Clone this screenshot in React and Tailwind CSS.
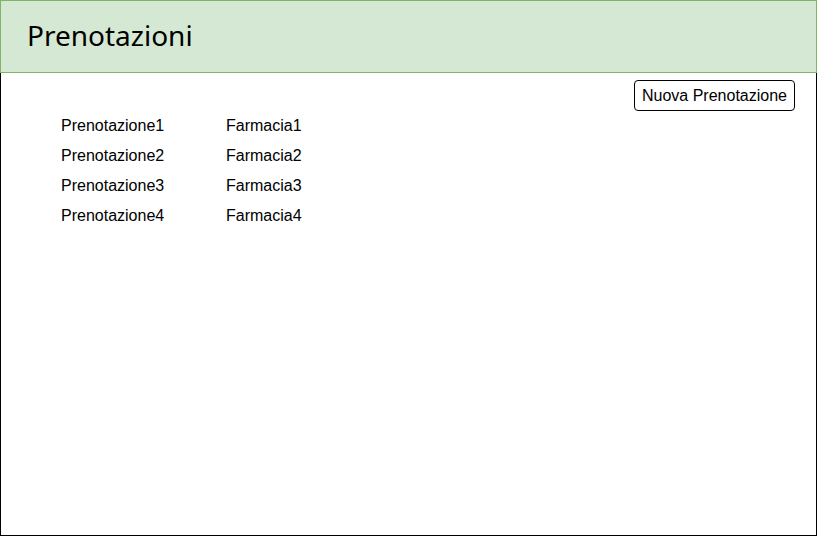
export default function App() {
  const rows = [1, 2, 3, 4];
  return (
    <div className="w-[817px] h-[536px] bg-white flex flex-col">
      <div className="h-[73px] border border-[#82b366] bg-[#d5e8d4] flex items-center pl-[26px] pb-[3px]">
        <span className="text-[28px] text-black" style={{ fontFamily: '"Noto Sans", sans-serif' }}>Prenotazioni</span>
      </div>
      <div className="flex-1 border-l border-r border-b border-black flex flex-col" style={{ fontFamily: '"Liberation Sans", Arial, sans-serif' }}>
        <div className="flex justify-end pt-[7px] pr-[21px]">
          <button className="w-[161px] h-[31px] border border-black rounded-[4px] text-[16px] text-black bg-white flex items-center justify-center">
            Nuova Prenotazione
          </button>
        </div>
        <div className="pl-[60px] flex flex-col">
          {rows.map((n) => (
            <div key={n} className="h-[30px] flex items-center text-[16px] text-black">
              <span className="w-[165px]">Prenotazione{n}</span>
              <span>Farmacia{n}</span>
            </div>
          ))}
        </div>
      </div>
    </div>
  );
}
